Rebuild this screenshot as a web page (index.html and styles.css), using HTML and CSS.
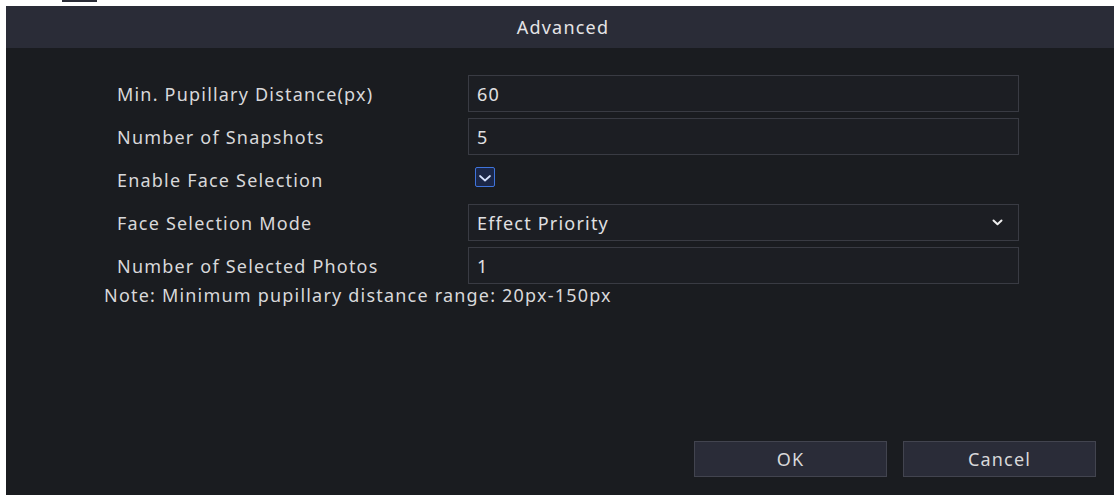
FILE: index.html
```html
<!DOCTYPE html>
<html lang="en">
<head>
<meta charset="utf-8">
<title>Advanced</title>
<link rel="stylesheet" href="styles.css">
</head>
<body>
<div class="topstrip"><span class="topmark"></span></div>
<div class="dialog">
  <div class="dialog-header">Advanced</div>
  <div class="dialog-body">
    <div class="form">
      <div class="label">Min. Pupillary Distance(px)</div>
      <div class="field"><div class="input">60</div></div>
      <div class="label">Number of Snapshots</div>
      <div class="field"><div class="input">5</div></div>
      <div class="label">Enable Face Selection</div>
      <div class="field">
        <span class="checkbox">
          <svg width="14" height="11" viewBox="0 0 14 11"><path d="M2 4 L7 8.5 L12 4" fill="none" stroke="#d6e2ff" stroke-width="1.7" stroke-linecap="round" stroke-linejoin="round"/></svg>
        </span>
      </div>
      <div class="label">Face Selection Mode</div>
      <div class="field">
        <div class="input select">
          <span>Effect Priority</span>
          <svg class="chev" width="11" height="7" viewBox="0 0 11 7"><path d="M1.5 1.5 L5.5 5.2 L9.5 1.5" fill="none" stroke="#eeeeee" stroke-width="2" stroke-linecap="round" stroke-linejoin="round"/></svg>
        </div>
      </div>
      <div class="label">Number of Selected Photos</div>
      <div class="field"><div class="input">1</div></div>
    </div>
    <div class="note">Note: Minimum pupillary distance range: 20px-150px</div>
    <div class="actions">
      <button class="btn">OK</button>
      <button class="btn">Cancel</button>
    </div>
  </div>
</div>
</body>
</html>
```
FILE: styles.css
```css
html, body {
  margin: 0;
  padding: 0;
  background: #ffffff;
  height: 495px;
  overflow: hidden;
}
body {
  font-family: "Noto Sans", "Open Sans", sans-serif;
  color: #d8d8da;
}
.topstrip {
  height: 6px;
  display: flex;
  padding-left: 62px;
}
.topmark {
  display: block;
  width: 35px;
  height: 2px;
  background: #2a2c36;
}
.dialog {
  margin-left: 6px;
  height: 489px;
  display: flex;
  flex-direction: column;
  background: #1a1c20;
}
.dialog-header {
  height: 42px;
  flex: none;
  background: #2a2c37;
  display: flex;
  align-items: center;
  justify-content: center;
  font-size: 18px;
  letter-spacing: 1.2px;
  color: #e4e4e6;
  padding-left: 6px;
}
.dialog-body {
  flex: 1;
  display: flex;
  flex-direction: column;
  padding: 27px 18px 18px 0;
}
.form {
  display: grid;
  grid-template-columns: 351px 551px;
  grid-auto-rows: 37px;
  row-gap: 6px;
  padding-left: 111px;
}
.label {
  display: flex;
  align-items: center;
  font-size: 18px;
  letter-spacing: 1.2px;
  white-space: nowrap;
}
.field {
  display: flex;
  align-items: center;
}
.input {
  box-sizing: border-box;
  width: 100%;
  height: 37px;
  border: 1px solid #393b43;
  background: #1c1e23;
  display: flex;
  align-items: center;
  padding-left: 8px;
  font-size: 18px;
  letter-spacing: 1.2px;
  color: #e0e0e2;
}
.select {
  justify-content: space-between;
  padding-right: 15px;
}
.chev {
  display: block;
}
.checkbox {
  box-sizing: border-box;
  width: 20px;
  height: 20px;
  margin-left: 7px;
  margin-bottom: 5px;
  border: 1.5px solid #3f74dc;
  background: #1b2748;
  border-radius: 2px;
  display: flex;
  align-items: center;
  justify-content: center;
}
.checkbox svg {
  display: block;
}
.note {
  padding-left: 98px;
  font-size: 18px;
  letter-spacing: 1.2px;
  line-height: 22px;
}
.actions {
  margin-top: auto;
  display: flex;
  justify-content: flex-end;
  gap: 16px;
}
.btn {
  width: 193px;
  height: 36px;
  box-sizing: border-box;
  border: 1px solid #42444f;
  background: #2a2c38;
  color: #d8d8da;
  font-family: "Noto Sans", "Open Sans", sans-serif;
  font-size: 18px;
  letter-spacing: 1.2px;
  padding: 0;
}
```
